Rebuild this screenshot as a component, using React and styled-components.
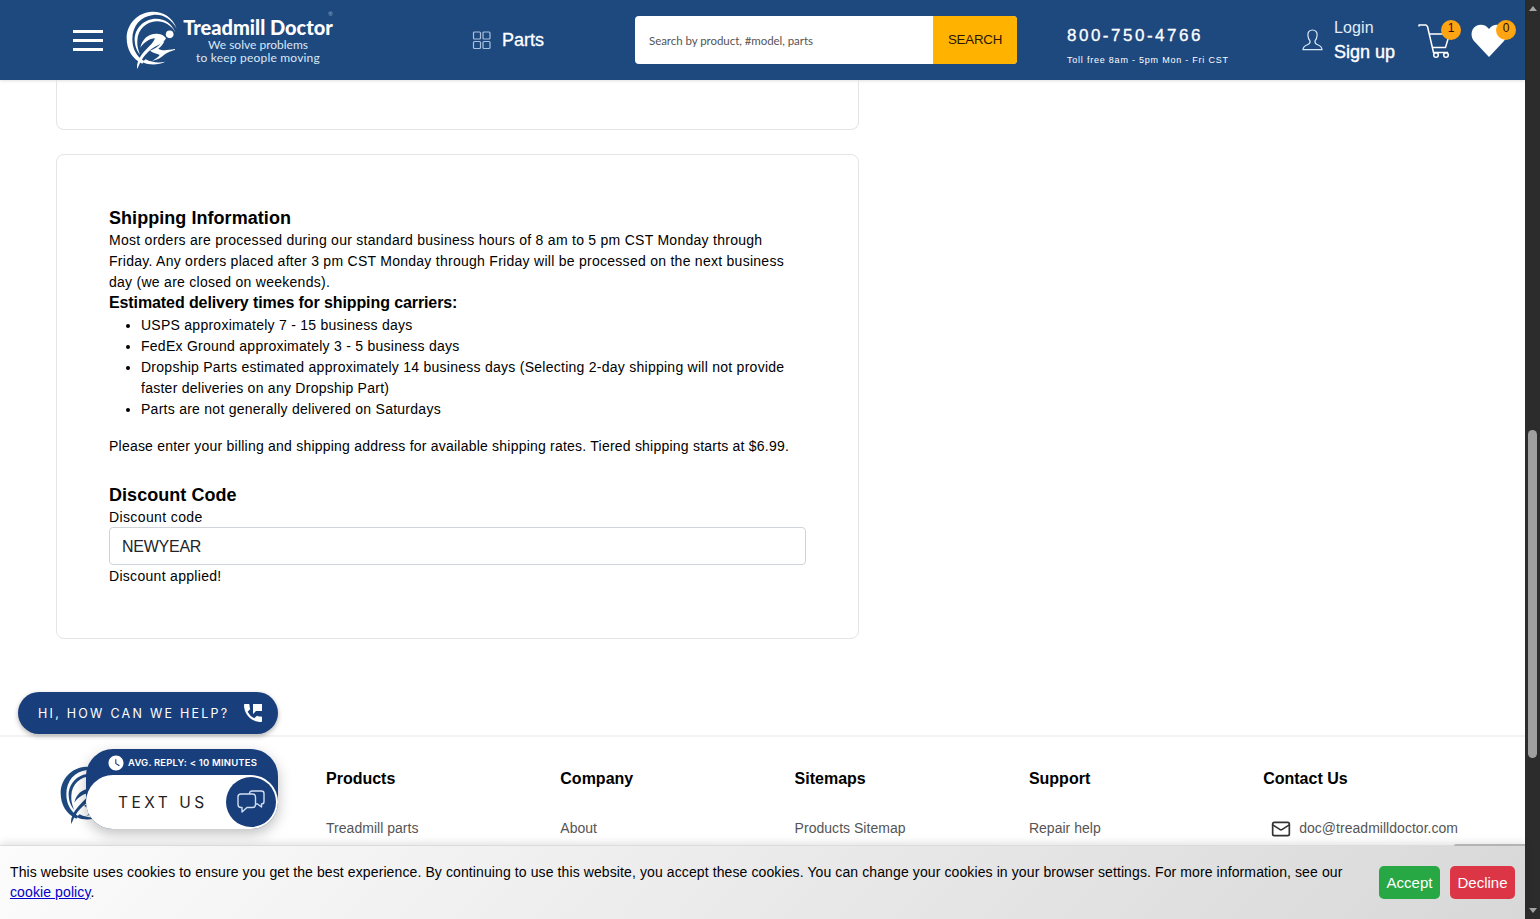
import React from 'react';
import styled, { createGlobalStyle, css } from 'styled-components';
import { MdPermPhoneMsg, MdWatchLater } from 'react-icons/md';
import { Mail } from 'lucide-react';

const navy = '#1e497f';
const widgetNavy = '#193e7c';

const GlobalStyle = createGlobalStyle`
  * {
    box-sizing: border-box;
  }
  body {
    margin: 0;
    background: #fff;
    color: #000;
    font-family: 'Liberation Sans', Arial, sans-serif;
    font-size: 14px;
    line-height: 21px;
    overflow: hidden;
  }
  h3, h4, p, ul {
    margin: 0;
  }
`;

const Screen = styled.div`
  display: flex;
  width: 1540px;
  height: 919px;
  overflow: hidden;
`;

const Page = styled.div`
  position: relative;
  display: flex;
  flex-direction: column;
  width: 1525px;
  height: 100%;
`;

const Header = styled.header`
  display: flex;
  align-items: center;
  flex: none;
  height: 80px;
  padding-left: 73px;
  background: ${navy};
  color: #fff;
  box-shadow: 0 1px 3px rgba(0, 0, 0, 0.12);
`;

const Burger = styled.div`
  display: flex;
  flex-direction: column;
  justify-content: space-between;
  width: 30px;
  height: 21px;
  margin-right: 23px;

  span {
    height: 3px;
    background: #fff;
  }
`;

const Brand = styled.div`
  display: flex;
  width: 346px;
  height: 58px;
`;

const BrandText = styled.div`
  position: relative;
  display: flex;
  flex-direction: column;
  align-items: center;
  width: 154px;
  margin-left: 2px;
  padding-top: 6px;
  font-family: Lato, sans-serif;
  white-space: nowrap;
`;

const BrandName = styled.div`
  font-size: 20px;
  font-weight: 900;
  line-height: 21px;
`;

const BrandLine = styled.div`
  font-size: 12px;
  line-height: 13px;
  color: #dbe8f6;
  letter-spacing: ${({ spacing }) => spacing}px;
`;

const Registered = styled.span`
  position: absolute;
  top: -1px;
  right: 2px;
  font-size: 6px;
  line-height: 7px;
  color: #8fa9cb;
`;

const PartsLink = styled.div`
  display: flex;
  align-items: center;
  gap: 11px;
  width: 163px;
  font-size: 18px;
  -webkit-text-stroke: 0.3px #fff;
`;

const Search = styled.div`
  display: flex;
  width: 382px;
  height: 48px;
  margin-right: 50px;
  border-radius: 4px;
  overflow: hidden;
  background: #fff;
`;

const SearchField = styled.div`
  display: flex;
  align-items: center;
  width: 298px;
  padding-left: 14px;
  color: #555;
  font-family: Lato, sans-serif;
  font-size: 11.5px;
  letter-spacing: -0.05px;
`;

const SearchButton = styled.div`
  display: flex;
  align-items: center;
  justify-content: center;
  flex: 1;
  padding-bottom: 2px;
  background: #ffb300;
  color: #2b1600;
  font-size: 13.3px;
  letter-spacing: -0.2px;
`;

const Phone = styled.div`
  width: 235px;
  padding-top: 15px;
`;

const PhoneNumber = styled.div`
  font-size: 17px;
  line-height: 24px;
  letter-spacing: 2.5px;
  -webkit-text-stroke: 0.3px #fff;
`;

const PhoneHours = styled.div`
  font-size: 9px;
  line-height: 24px;
  letter-spacing: 0.78px;
`;

const Account = styled.div`
  display: flex;
  align-items: center;
  width: 116px;
  gap: 11px;
`;

const AccountLinks = styled.div`
  color: #e3edf7;
  font-size: 16px;
  line-height: 24px;
  letter-spacing: 0.1px;

  strong {
    display: block;
    color: #fff;
    font-size: 18px;
    font-weight: 400;
    letter-spacing: 0;
    -webkit-text-stroke: 0.4px #fff;
  }
`;

const IconSlot = styled.div`
  position: relative;
  width: ${({ width }) => width}px;
  height: 40px;
`;

const Badge = styled.span`
  position: absolute;
  top: 0;
  left: ${({ left }) => left}px;
  width: 20px;
  height: 20px;
  border-radius: 50%;
  background: #ffa412;
  color: #2b0d00;
  font-size: 12px;
  line-height: 17px;
  text-align: center;
`;

const Content = styled.main`
  flex: none;
  height: 655px;
  padding-left: 56px;
`;

const Card = styled.section`
  width: 803px;
  border: 1px solid #e4e4e4;
  border-radius: 8px;

  ${({ tail }) =>
    tail
      ? css`
          height: 50px;
          margin-bottom: 24px;
          border-top: 0;
          border-radius: 0 0 8px 8px;
        `
      : css`
          height: 485px;
          padding: 52px 52px 0;
        `}
`;

const Heading = styled.h3`
  font-size: 18px;
  line-height: 22px;
  letter-spacing: 0.05px;
`;

const SubHeading = styled.h4`
  font-size: 16px;
  line-height: 19px;
  letter-spacing: -0.1px;
`;

const Text = styled.p`
  letter-spacing: ${({ spacing = 0.27 }) => spacing}px;
  white-space: nowrap;
`;

const ShippingText = styled(Text)`
  padding-top: 1px;
`;

const List = styled.ul`
  padding: 3px 0 16px 32px;
  letter-spacing: 0.26px;
  white-space: nowrap;
`;

const Discount = styled.div`
  padding-top: 27px;
`;

const DiscountText = styled(Text)`
  position: relative;
  top: 1px;
`;

const Input = styled.div`
  height: 38px;
  padding: 0 12px;
  border: 1px solid #ced4da;
  border-radius: 4px;
  color: #212529;
  font-size: 16px;
  line-height: 37px;
  letter-spacing: -0.25px;
`;

const Footer = styled.footer`
  display: flex;
  flex: 1;
  padding: 29px 0 0 60px;
  border-top: 2px solid #f3f3f3;
  overflow: hidden;
`;

const FooterLogo = styled.div`
  width: 266px;
`;

const FooterColumn = styled.div`
  width: 234.3px;
  padding-top: 2px;

  h4 {
    margin-bottom: 29px;
    font-size: 16px;
    line-height: 21px;
  }
`;

const FooterLink = styled.div`
  display: flex;
  align-items: center;
  gap: 8px;
  padding-left: ${({ indent }) => (indent ? 8 : 0)}px;
  color: #555;
  letter-spacing: 0.03px;
`;

const CookieBar = styled.div`
  position: relative;
  display: flex;
  align-items: center;
  flex: none;
  height: 74px;
  padding: 0 10px;
  border-top: 1px solid #dcdcdc;
  background: linear-gradient(135deg, #fcfcfc, #d8d8d8);
  box-shadow: 0 -2px 8px rgba(0, 0, 0, 0.12);
  z-index: 1;

  p {
    flex: 1;
    padding-bottom: 2px;
    line-height: 20px;
    letter-spacing: 0.105px;
    white-space: nowrap;
  }
  a {
    color: #0000c8;
  }
`;

/* edge of the badge that is tucked behind the cookie bar */
const HiddenBadgeEdge = styled.div`
  position: absolute;
  top: -2px;
  right: 0;
  width: 71px;
  height: 2px;
  border-radius: 2px 0 0 0;
  background: #b4b4b4;
`;

const CookieButton = styled.button`
  flex: none;
  height: 33px;
  margin-left: 10px;
  padding: 0;
  width: ${({ width }) => width}px;
  border: 0;
  border-radius: 5px;
  background: ${({ color }) => color};
  color: #fff;
  font: 15px 'Liberation Sans', Arial, sans-serif;
`;

const HelpPill = styled.div`
  position: absolute;
  left: 18px;
  top: 692px;
  display: flex;
  align-items: center;
  justify-content: space-between;
  width: 260px;
  height: 42px;
  padding: 0 13px 0 20px;
  border-radius: 21px;
  background: ${widgetNavy};
  color: #fff;
  font-family: Inter, sans-serif;
  font-size: 12.5px;
  letter-spacing: 2.25px;
  white-space: nowrap;
  box-shadow: 0 2px 5px rgba(0, 0, 0, 0.3);
  z-index: 2;
`;

const TextWidget = styled.div`
  position: absolute;
  left: 86px;
  top: 749px;
  width: 192px;
  height: 80px;
  border-radius: 27px;
  background: ${widgetNavy};
  color: #fff;
  font-family: Inter, sans-serif;
  box-shadow: 0 5px 14px rgba(0, 0, 0, 0.25);
  z-index: 2;
`;

const ReplyTime = styled.div`
  display: flex;
  align-items: center;
  gap: 3px;
  height: 27px;
  margin-bottom: -1px;
  padding-left: 21px;
  font-size: 9.5px;
  font-weight: 600;
  letter-spacing: 0.18px;
  white-space: nowrap;
`;

const TextUs = styled.div`
  display: flex;
  align-items: center;
  justify-content: space-between;
  height: 54px;
  padding: 0 2px 0 32px;
  border-radius: 27px;
  background: #fff;
  color: #222;
  font-size: 15.5px;
  letter-spacing: 3.5px;
`;

const ChatCircle = styled.div`
  display: flex;
  align-items: center;
  justify-content: center;
  width: 50px;
  height: 50px;
  border-radius: 50%;
  background: ${widgetNavy};
`;

const Scrollbar = styled.div`
  display: flex;
  flex-direction: column;
  align-items: center;
  width: 15px;
  padding: 6px 0;
  background: #2c2c2c;
`;

const Thumb = styled.div`
  width: 9px;
  height: 328px;
  margin: 419px 0 auto;
  border-radius: 5px;
  background: #9f9f9f;
`;

const Arrow = styled.div`
  border: 4px solid transparent;
  ${({ up }) =>
    up
      ? css`
          border-top: 0;
          border-bottom: 5px solid #a5a5a5;
        `
      : css`
          border-bottom: 0;
          border-top: 5px solid #a5a5a5;
        `}
`;

const RunnerLogo = ({ color }) => (
  <svg width="53" height="58" viewBox="227 31 159 174" fill={color}>
    <path d="M379 84C366 47 336 32 305 33C262 35 229 70 229 112C229 148 247 176 276 189L281 181C258 167 246 144 246 115C246 76 271 47 308 43C337 40 362 54 379 84Z" />
    <path d="M376 96C364 68 344 54 318 54C280 54 252 84 253 119C254 139 261 153 269 162C263 146 260 134 261 120C262 86 289 63 319 62C344 62 363 75 376 96Z" />
    <circle cx="358" cy="101" r="11.500" />
    <path d="M270 141C275 115 295 98 320 99C335 100 343 106 347 113C340 127 320 135 308 142C288 155 273 175 261 205C257 188 268 166 288 146C300 134 310 124 314 113C298 114 282 124 270 141Z" />
    <path d="M299 150C312 146 325 138 333 125L342 122C338 132 331 139 324 144C336 151 348 149 374 145L374 148C356 153 348 158 341 163C333 171 322 177 306 181C316 174 326 168 328 163C320 158 308 157 299 150Z" />
    <path d="M276 184C300 196 326 192 345 183C326 187 305 186 286 176Z" />
  </svg>
);

const GridIcon = () => (
  <svg width="19" height="19" viewBox="0 0 19 19" fill="none" stroke="#a9c0de" strokeWidth="1.2">
    <rect x="1.500" y="1" width="7" height="7" rx="1" />
    <rect x="11" y="1" width="7" height="7" rx="1" />
    <rect x="1.500" y="10.500" width="7" height="7" rx="1" />
    <rect x="11" y="10.500" width="7" height="7" rx="1" />
  </svg>
);

const UserIcon = () => (
  <svg width="21" height="22" viewBox="0 0 21 22" fill="none" stroke="#d9e8f8" strokeWidth="1.2">
    <path d="M10.500 1C7.500 1 5.700 3.100 5.900 6.200C6 8.900 7 10.700 8 11.900C8.400 14.200 7.600 15 5.400 15.800C2.500 16.800 1.100 17.900 1 20.700H20C19.900 17.900 18.500 16.800 15.600 15.800C13.400 15 12.600 14.200 13 11.900C14 10.700 15 8.900 15.100 6.200C15.300 3.100 13.500 1 10.500 1Z" />
  </svg>
);

const CartIcon = () => (
  <svg width="34" height="40" viewBox="0 0 34 40" fill="none" stroke="#fff" strokeWidth="1.5">
    <path d="M1 6V5H8L9.500 6.500L15.500 32.500" strokeLinecap="round" strokeLinejoin="round" />
    <path d="M11.500 14H31.500L27.500 27.500H14.500" />
    <path d="M15 32.500H30" />
    <circle cx="18" cy="35" r="2.300" />
    <circle cx="28" cy="35" r="2.300" />
  </svg>
);

const HeartIcon = () => (
  <svg width="36" height="40" viewBox="0 0 36 40" fill="#fff">
    <path d="M18 37L3 21C-1 16 0 9 5 6C10 3.500 15 5 18 9C21 5 26 3.500 31 6C36 9 37 16 33 21Z" />
  </svg>
);

const ChatIcon = () => (
  <svg width="28" height="24" viewBox="0 0 28 24" fill="none" stroke="#cfdef2" strokeWidth="1.4" strokeLinejoin="round">
    <path d="M4 4H15.500C17.500 4 18.500 5 18.500 7V14.500C18.500 16.500 17.500 17.500 15.500 17.500H10L5 22V17.500H4C2 17.500 1 16.500 1 14.500V7C1 5 2 4 4 4Z" />
    <path d="M12.500 4V3.500C12.500 2 13.500 1 15 1H24.500C26 1 27 2 27 3.500V11.500C27 13 26 14 24.500 14V17L20.500 14H18.500" />
  </svg>
);

const footerColumns = [
  { title: 'Products', link: 'Treadmill parts' },
  { title: 'Company', link: 'About' },
  { title: 'Sitemaps', link: 'Products Sitemap' },
  { title: 'Support', link: 'Repair help' },
  { title: 'Contact Us', link: 'doc@treadmilldoctor.com', mail: true },
];

const App = () => {
  return (
    <Screen>
      <GlobalStyle />
      <Page>
        <Header>
          <Burger>
            <span />
            <span />
            <span />
          </Burger>
          <Brand>
            <RunnerLogo color="#fff" />
            <BrandText>
              <Registered>®</Registered>
              <BrandName>Treadmill Doctor</BrandName>
              <BrandLine spacing={0}>We solve problems</BrandLine>
              <BrandLine spacing={0.2}>to keep people moving</BrandLine>
            </BrandText>
          </Brand>
          <PartsLink>
            <GridIcon />
            Parts
          </PartsLink>
          <Search>
            <SearchField>Search by product, #model, parts</SearchField>
            <SearchButton>SEARCH</SearchButton>
          </Search>
          <Phone>
            <PhoneNumber>800-750-4766</PhoneNumber>
            <PhoneHours>Toll free 8am - 5pm Mon - Fri CST</PhoneHours>
          </Phone>
          <Account>
            <UserIcon />
            <AccountLinks>
              Login
              <strong>Sign up</strong>
            </AccountLinks>
          </Account>
          <IconSlot width={53}>
            <CartIcon />
            <Badge left={23}>1</Badge>
          </IconSlot>
          <IconSlot width={46}>
            <HeartIcon />
            <Badge left={25}>0</Badge>
          </IconSlot>
        </Header>

        <Content>
          <Card tail />
          <Card>
            <Heading>Shipping Information</Heading>
            <ShippingText>
              Most orders are processed during our standard business hours of 8 am to 5 pm CST Monday through
              <br />
              Friday. Any orders placed after 3 pm CST Monday through Friday will be processed on the next business
              <br />
              day (we are closed on weekends).
            </ShippingText>
            <SubHeading>Estimated delivery times for shipping carriers:</SubHeading>
            <List>
              <li>USPS approximately 7 - 15 business days</li>
              <li>FedEx Ground approximately 3 - 5 business days</li>
              <li>
                Dropship Parts estimated approximately 14 business days (Selecting 2-day shipping will not provide
                <br />
                faster deliveries on any Dropship Part)
              </li>
              <li>Parts are not generally delivered on Saturdays</li>
            </List>
            <Text spacing={0.22}>
              Please enter your billing and shipping address for available shipping rates. Tiered shipping starts at
              $6.99.
            </Text>
            <Discount>
              <Heading>Discount Code</Heading>
              <DiscountText spacing={0.38}>Discount code</DiscountText>
              <Input>NEWYEAR</Input>
              <DiscountText spacing={0.3}>Discount applied!</DiscountText>
            </Discount>
          </Card>
        </Content>

        <Footer>
          <FooterLogo>
            <RunnerLogo color={navy} />
          </FooterLogo>
          {footerColumns.map(({ title, link, mail }) => (
            <FooterColumn key={title}>
              <h4>{title}</h4>
              <FooterLink indent={mail}>
                {mail && <Mail size={20} strokeWidth={2} color="#333" />}
                {link}
              </FooterLink>
            </FooterColumn>
          ))}
        </Footer>

        <CookieBar>
          <HiddenBadgeEdge />
          <p>
            This website uses cookies to ensure you get the best experience. By continuing to use this website, you
            accept these cookies. You can change your cookies in your browser settings. For more information, see our
            <br />
            <a href="#policy">cookie policy</a>.
          </p>
          <CookieButton color="#28a745" width={61}>
            Accept
          </CookieButton>
          <CookieButton color="#dc3545" width={65}>
            Decline
          </CookieButton>
        </CookieBar>

        <HelpPill>
          HI, HOW CAN WE HELP?
          <MdPermPhoneMsg size={24} />
        </HelpPill>
        <TextWidget>
          <ReplyTime>
            <MdWatchLater size={18} />
            AVG. REPLY: &lt; 10 MINUTES
          </ReplyTime>
          <TextUs>
            TEXT US
            <ChatCircle>
              <ChatIcon />
            </ChatCircle>
          </TextUs>
        </TextWidget>
      </Page>
      <Scrollbar>
        <Arrow up />
        <Thumb />
        <Arrow />
      </Scrollbar>
    </Screen>
  );
};

export default App;
